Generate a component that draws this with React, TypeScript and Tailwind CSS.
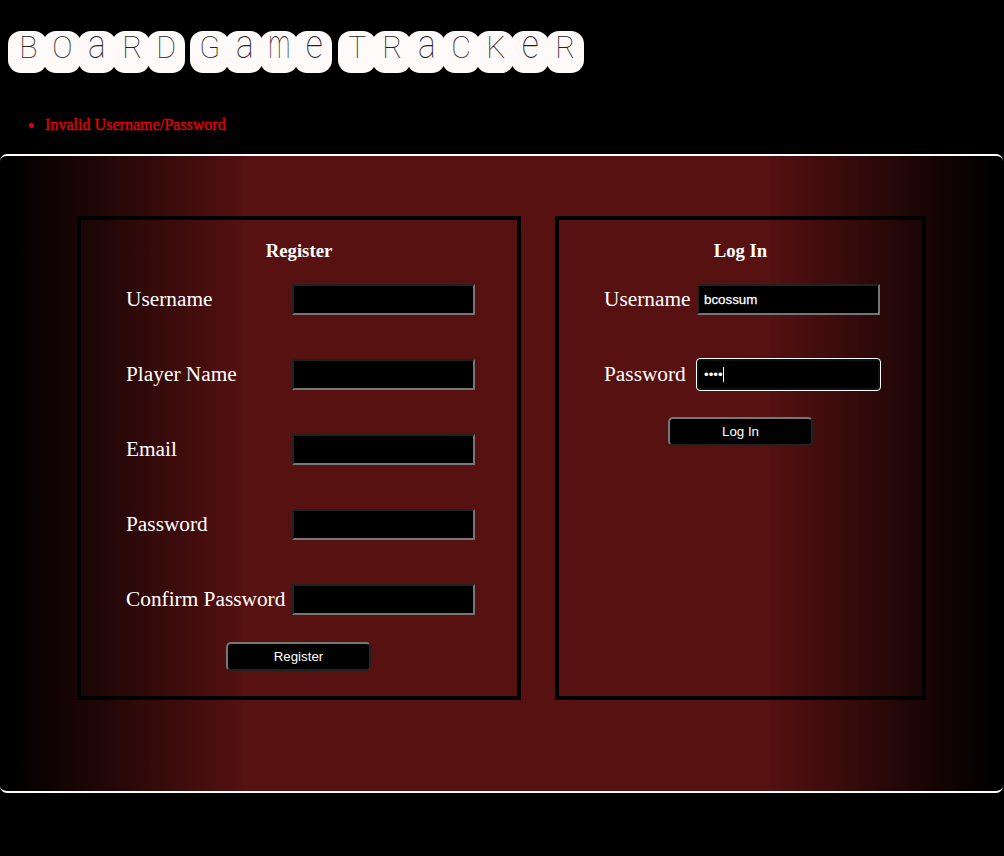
import React from "react";

type Glyph = { ch: string; kind: "cap" | "small" | "m" };

const cap = (ch: string): Glyph => ({ ch, kind: "cap" });
const small = (ch: string): Glyph => ({ ch, kind: "small" });
const wide: Glyph = { ch: "m", kind: "m" };

const words: Glyph[][] = [
  [cap("B"), cap("O"), small("a"), cap("R"), cap("D")],
  [cap("G"), small("a"), wide, small("e")],
  [cap("T"), cap("R"), small("a"), cap("C"), cap("K"), small("e"), cap("R")],
];

const glyphClass = {
  cap: "text-[31px] leading-[33px] scale-x-[0.98]",
  small: "text-[41px] leading-[27px] scale-x-[0.82]",
  m: "text-[41px] leading-[27px] scale-x-[0.6]",
};

function Tile({ glyph }: { glyph: Glyph }) {
  return (
    <span className="-mr-[3.5px] flex h-[42px] w-[38.15px] shrink-0 justify-center rounded-[13px] bg-[#fffafa] pl-[1px]">
      <span
        className={`block h-[42px] font-['Roboto',sans-serif] font-thin text-[#222] ${glyphClass[glyph.kind]}`}
      >
        {glyph.ch}
      </span>
    </span>
  );
}

function Field({ label, labelWidth, children }: { label: string; labelWidth: string; children?: React.ReactNode }) {
  return (
    <div className="flex h-[31px] items-center">
      <label className={`shrink-0 whitespace-nowrap pb-[2px] text-[21.33px] leading-6 ${labelWidth}`}>{label}</label>
      {children ?? <Box />}
    </div>
  );
}

function Box({ children }: { children?: React.ReactNode }) {
  return (
    <div className="flex h-[31px] w-[183px] items-center border-2 border-t-[#222] border-r-[#767676] border-b-[#767676] border-l-[#222] bg-black px-[5px] font-['Liberation_Sans',Arial,sans-serif] text-[13.333px] leading-[15px] [-webkit-text-stroke:0.25px_white]">
      {children}
    </div>
  );
}

function FocusedBox({ children }: { children?: React.ReactNode }) {
  return (
    <div className="-mx-px flex h-[33px] w-[185px] shrink-0 items-center rounded-[4px] border border-white bg-[#101010] p-[2px] font-['Liberation_Sans',Arial,sans-serif] text-[13.333px] leading-[15px]">
      <div className="flex h-[27px] flex-1 items-center rounded-[2px] bg-black px-[5px]">
        {children}
        <span className="h-[15px] w-px bg-white" />
      </div>
    </div>
  );
}

function Submit({ children }: { children: React.ReactNode }) {
  return (
    <button className="mx-auto block h-[29px] w-[145px] rounded-[5px] border-2 border-t-[#767676] border-r-[#222] border-b-[#222] border-l-[#767676] bg-black text-center font-['Liberation_Sans',Arial,sans-serif] text-[13.333px] leading-[15px]">
      {children}
    </button>
  );
}

export default function App() {
  return (
    <div className="h-[856px] w-[1004px] overflow-hidden bg-black font-['Liberation_Serif','Times_New_Roman',serif] text-white">
      <h1 className="flex gap-[8.8px] pt-[31px] pl-[8.4px]">
        {words.map((word, i) => (
          <span key={i} className="flex">
            {word.map((glyph, j) => (
              <Tile key={j} glyph={glyph} />
            ))}
          </span>
        ))}
      </h1>

      <ul className="mt-[43px] h-[38px] list-disc pl-[45px] text-[16px] leading-[18px] tracking-[0.03px] text-[#e60000] [-webkit-text-stroke:0.35px_#e60000]">
        <li>Invalid Username/Password</li>
      </ul>

      <main className="flex h-[639px] w-[1003px] items-start gap-[34px] rounded-[7px] border-y-2 border-white bg-[linear-gradient(to_right,#000_1%,#581111_25%,#581111_76%,#000_99%)] pt-[60px] pl-[77px]">
        <section className="h-[484px] w-[444px] border-4 border-black pt-[20px]">
          <h3 className="text-center text-[18.72px] leading-[22px] font-bold">Register</h3>
          <div className="mt-[22px] flex flex-col gap-[44px] pl-[45px]">
            <Field label="Username" labelWidth="w-[166px]" />
            <Field label="Player Name" labelWidth="w-[166px]" />
            <Field label="Email" labelWidth="w-[166px]" />
            <Field label="Password" labelWidth="w-[166px]" />
            <Field label="Confirm Password" labelWidth="w-[166px]" />
          </div>
          <div className="mt-[27px] pr-[1px]">
            <Submit>Register</Submit>
          </div>
        </section>

        <section className="h-[484px] w-[371px] border-4 border-black pt-[20px]">
          <h3 className="text-center text-[18.72px] leading-[22px] font-bold">Log In</h3>
          <div className="mt-[22px] flex flex-col gap-[44px] pl-[45px]">
            <Field label="Username" labelWidth="w-[93px]">
              <Box>bcossum</Box>
            </Field>
            <Field label="Password" labelWidth="w-[93px]">
              <FocusedBox>••••</FocusedBox>
            </Field>
          </div>
          <div className="mt-[27px]">
            <Submit>Log In</Submit>
          </div>
        </section>
      </main>
    </div>
  );
}
